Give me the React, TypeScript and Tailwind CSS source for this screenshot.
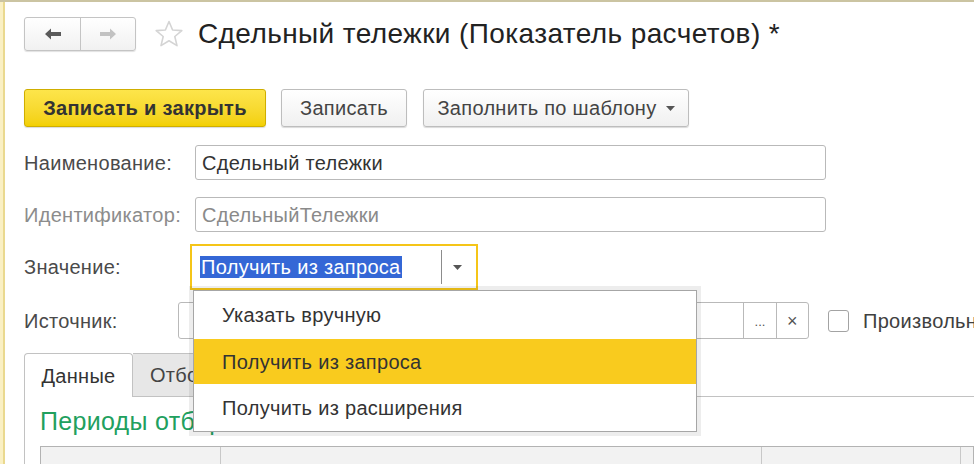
import React from "react";

function BackArrow({ color }: { color: string }) {
  return (
    <svg width="18" height="14" viewBox="0 0 18 14">
      <path d="M1 7 L7 1.5 L7 5 L17 5 L17 9 L7 9 L7 12.5 Z" fill={color} />
    </svg>
  );
}

function FwdArrow({ color }: { color: string }) {
  return (
    <svg width="18" height="14" viewBox="0 0 18 14">
      <path d="M17 7 L11 1.5 L11 5 L1 5 L1 9 L11 9 L11 12.5 Z" fill={color} />
    </svg>
  );
}

function Star() {
  return (
    <svg width="30" height="30" viewBox="0 0 30 30">
      <path
        d="M15 2.5 L18.6 11 L27.8 11.6 L20.8 17.5 L23 26.6 L15 21.7 L7 26.6 L9.2 17.5 L2.2 11.6 L11.4 11 Z"
        fill="none"
        stroke="#d4d4d4"
        strokeWidth="1.6"
        strokeLinejoin="round"
      />
    </svg>
  );
}

function Caret({ color = "#555" }: { color?: string }) {
  return (
    <svg width="9" height="5" viewBox="0 0 9 5">
      <path d="M0 0 L9 0 L4.5 5 Z" fill={color} />
    </svg>
  );
}

export default function App() {
  return (
    <div className="w-[974px] h-[464px] overflow-hidden bg-white relative flex border-t-2 border-[#cbc4a2] font-['Liberation_Sans',Arial,sans-serif] text-[#333] tracking-[0.3px]">
      {/* left strip */}
      <div className="w-[5px] shrink-0 bg-[#faf0c4] border-r-2 border-[#ead98f]" />

      <div className="flex-1 flex flex-col pl-[19px] min-w-0">
        {/* header */}
        <div className="mt-[15px] h-[34px] shrink-0 flex items-center">
          <div className="flex h-[34px] w-[112px] shrink-0 rounded-[3px] border border-[#c4c4c4] bg-gradient-to-b from-white to-[#f1f1f1] shadow-[0_1px_1px_rgba(0,0,0,0.12)]">
            <div className="w-[56px] flex items-center justify-center border-r border-[#c4c4c4]">
              <BackArrow color="#5a5a5a" />
            </div>
            <div className="flex-1 flex items-center justify-center">
              <FwdArrow color="#c2c2c2" />
            </div>
          </div>
          <div className="ml-[18px] flex items-center shrink-0">
            <Star />
          </div>
          <div className="ml-[14px] text-[28px] tracking-[0.4px] leading-none text-[#222] whitespace-nowrap">
            Сдельный тележки (Показатель расчетов) *
          </div>
        </div>

        {/* buttons */}
        <div className="mt-[38px] shrink-0 flex items-center gap-[15px] h-[38px]">
          <div className="h-[38px] w-[242px] shrink-0 flex items-center justify-center rounded-[3px] border border-[#cfae00] bg-gradient-to-b from-[#fde54a] to-[#f3d000] text-[20px] font-bold text-[#333] shadow-[0_1px_1px_rgba(0,0,0,0.15)]">
            Записать и закрыть
          </div>
          <div className="h-[38px] w-[126px] shrink-0 flex items-center justify-center rounded-[3px] border border-[#bdbdbd] bg-gradient-to-b from-white to-[#f0f0f0] text-[20px] text-[#444] shadow-[0_1px_1px_rgba(0,0,0,0.15)]">
            Записать
          </div>
          <div className="ml-[1px] h-[38px] w-[266px] shrink-0 flex items-center justify-center gap-[9px] rounded-[3px] border border-[#bdbdbd] bg-gradient-to-b from-white to-[#f0f0f0] text-[20px] text-[#444] shadow-[0_1px_1px_rgba(0,0,0,0.15)]">
            <span>Заполнить по шаблону</span>
            <Caret />
          </div>
        </div>

        {/* Наименование */}
        <div className="mt-[18px] shrink-0 flex items-center h-[35px]">
          <div className="w-[171px] shrink-0 text-[20px] text-[#4a4a4a]">Наименование:</div>
          <div className="w-[631px] shrink-0 h-[35px] rounded-[3px] border border-[#b9b9b9] flex items-center px-[6px] text-[20px] text-[#333]">
            Сдельный тележки
          </div>
        </div>

        {/* Идентификатор */}
        <div className="mt-[17px] shrink-0 flex items-center h-[35px]">
          <div className="w-[171px] shrink-0 text-[20px] text-[#8c8c8c]">Идентификатор:</div>
          <div className="w-[631px] shrink-0 h-[35px] rounded-[3px] border border-[#b9b9b9] flex items-center px-[6px] text-[20px] text-[#8a8a8a]">
            СдельныйТележки
          </div>
        </div>

        {/* Значение */}
        <div className="mt-[12px] shrink-0 flex items-center h-[46px]">
          <div className="w-[166px] shrink-0 text-[20px] text-[#4a4a4a]">Значение:</div>
          <div className="w-[288px] shrink-0 h-[46px] border-2 border-[#f5c518] p-[3px]">
            <div className="h-full w-full flex items-center">
              <div className="flex-1 flex items-center pl-[5px]">
                <span className="bg-[#3467d6] text-white text-[20px] leading-[22px] px-[1px] whitespace-nowrap">
                  Получить из запроса
                </span>
              </div>
              <div className="w-px h-[34px] bg-[#8c8c8c]" />
              <div className="w-[31px] flex items-center justify-center">
                <Caret color="#555" />
              </div>
            </div>
          </div>
        </div>

        {/* Источник */}
        <div className="mt-[12px] shrink-0 flex items-center h-[37px]">
          <div className="w-[154px] shrink-0 text-[20px] text-[#4a4a4a]">Источник:</div>
          <div className="flex shrink-0 h-[37px] rounded-[3px] border border-[#b9b9b9]">
            <div className="w-[564px]" />
            <div className="w-[33px] border-l border-[#b9b9b9] flex items-end justify-center pb-[10px] text-[13px] text-[#555] leading-none tracking-normal">
              ...
            </div>
            <div className="w-[32px] border-l border-[#b9b9b9] flex items-center justify-center text-[18px] text-[#555] leading-none">
              ×
            </div>
          </div>
          <div className="ml-[19px] w-[21px] h-[22px] rounded-[3px] border border-[#a3a3a3] bg-white shrink-0" />
          <div className="ml-[14px] shrink-0 text-[20px] text-[#404040] whitespace-nowrap">Произвольный</div>
        </div>

        {/* tabs */}
        <div className="mt-[14px] shrink-0 flex items-end h-[44px]">
          <div className="w-[109px] shrink-0 h-[44px] rounded-t-[4px] border border-b-0 border-[#c2c2c2] bg-white flex items-center justify-center text-[20px] text-[#333] relative z-[1]">
            Данные
          </div>
          <div className="w-[120px] shrink-0 h-[44px] rounded-tr-[4px] border border-l-0 border-[#c2c2c2] bg-[#e7e7e7] flex items-center pl-[17px] text-[20px] text-[#444]">
            Отбор
          </div>
          <div className="flex-1 h-[44px] border-b border-[#c2c2c2]" />
        </div>

        {/* panel */}
        <div className="flex-1 shrink-0 border-l border-[#c2c2c2] mt-[-1px] pl-[15px] pt-[10px]">
          <div className="text-[25px] leading-[30px] text-[#21a05e] whitespace-nowrap">
            Периоды отбора
          </div>
          <div className="mt-[10px] h-[40px] flex border border-[#b3b3b3] bg-[#f2f2f2]">
            <div className="w-[180px] border-r border-[#c8c8c8]" />
            <div className="w-[541px] border-r border-[#c8c8c8]" />
            <div className="w-[199px] border-r border-[#c8c8c8]" />
            <div className="flex-1" />
          </div>
        </div>
      </div>

      {/* dropdown popup */}
      <div className="absolute left-[193px] top-[288px] w-[504px] border border-[#a6a6a6] bg-white shadow-[0_0_0_4px_rgba(0,0,0,0.07)]">
        <div className="h-[48px] flex items-center pl-[28px] text-[20px] text-[#333]">Указать вручную</div>
        <div className="h-[45px] flex items-center pl-[28px] text-[20px] text-[#333] bg-[#f9cb1e]">
          Получить из запроса
        </div>
        <div className="h-[47px] flex items-center pl-[28px] text-[20px] text-[#333]">Получить из расширения</div>
      </div>
    </div>
  );
}
